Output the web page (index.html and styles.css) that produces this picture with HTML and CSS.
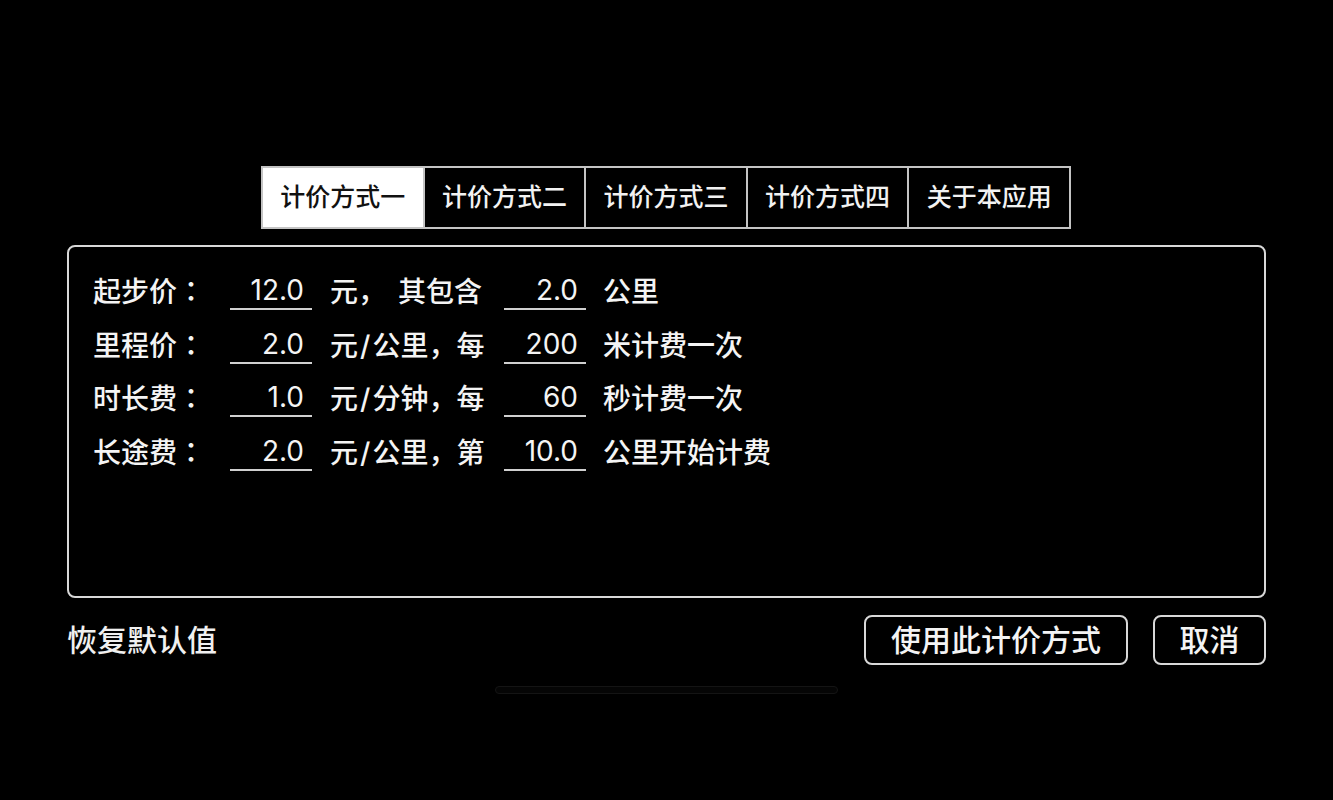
FILE: index.html
```html
<!DOCTYPE html>
<html lang="zh-CN">
<head>
<meta charset="utf-8">
<title>计价方式</title>
<link rel="stylesheet" href="styles.css">
</head>
<body>
<div class="screen">
  <div class="tabs">
    <div class="tab active">计价方式一</div>
    <div class="tab">计价方式二</div>
    <div class="tab">计价方式三</div>
    <div class="tab">计价方式四</div>
    <div class="tab">关于本应用</div>
  </div>

  <div class="panel">
    <div class="row">
      <span class="label">起步价<span class="colon" lang="zh-TW">：</span></span>
      <span class="field">12.0</span>
      <span class="mid"><span>元，</span><span class="gapword">其包含</span></span>
      <span class="field">2.0</span>
      <span class="tail">公里</span>
    </div>
    <div class="row">
      <span class="label">里程价<span class="colon" lang="zh-TW">：</span></span>
      <span class="field">2.0</span>
      <span class="mid">元<span class="slash">/</span>公里，每</span>
      <span class="field">200</span>
      <span class="tail">米计费一次</span>
    </div>
    <div class="row">
      <span class="label">时长费<span class="colon" lang="zh-TW">：</span></span>
      <span class="field">1.0</span>
      <span class="mid">元<span class="slash">/</span>分钟，每</span>
      <span class="field">60</span>
      <span class="tail">秒计费一次</span>
    </div>
    <div class="row">
      <span class="label">长途费<span class="colon" lang="zh-TW">：</span></span>
      <span class="field">2.0</span>
      <span class="mid">元<span class="slash">/</span>公里，第</span>
      <span class="field">10.0</span>
      <span class="tail">公里开始计费</span>
    </div>
  </div>

  <div class="footer">
    <span class="reset">恢复默认值</span>
    <div class="actions">
      <button class="btn btn-use">使用此计价方式</button>
      <button class="btn btn-cancel">取消</button>
    </div>
  </div>

  <div class="home-indicator"></div>
</div>
</body>
</html>
```

FILE: styles.css
```css
html, body {
  margin: 0;
  padding: 0;
  background: #000;
}

body {
  width: 1333px;
  height: 800px;
  overflow: hidden;
  color: #f4f4f4;
  font-family: "Inter", "Noto Sans CJK SC", sans-serif;
  font-weight: 500;
}

.screen {
  width: 1199px;
  margin-left: 67px;
  padding-top: 166px;
}

/* Tabs */
.tabs {
  display: flex;
  width: 810px;
  height: 63px;
  margin-left: 194px;
  box-sizing: border-box;
  border: 2px solid #c4c4c4;
}

.tab {
  flex: 1;
  display: flex;
  align-items: center;
  justify-content: center;
  box-sizing: border-box;
  padding-bottom: 5px;
  font-size: 25px;
  color: #f2f2f2;
  border-left: 2px solid #c4c4c4;
}

.tab:first-child {
  border-left: none;
}

.tab.active {
  background: #fff;
  color: #111;
}

/* Panel */
.panel {
  margin-top: 16px;
  height: 353px;
  box-sizing: border-box;
  border: 2px solid #d8d8d8;
  border-radius: 8px;
  padding: 18px 24px 0 24px;
}

.row {
  display: flex;
  align-items: center;
  height: 53.7px;
  font-size: 28px;
}

.label,
.mid,
.tail {
  padding-bottom: 4px;
}

.label {
  width: 137px;
  flex: none;
  white-space: nowrap;
}

.colon {
  font-family: "Noto Sans CJK TC", "Noto Sans CJK SC", sans-serif;
}

.slash {
  padding: 0 2px;
}

.field {
  flex: none;
  width: 82px;
  height: 36px;
  line-height: 32px;
  box-sizing: border-box;
  border-bottom: 2px solid #d0d0d0;
  text-align: right;
  padding-right: 8px;
  font-weight: 400;
}

.mid {
  flex: none;
  width: 192px;
  box-sizing: border-box;
  padding-left: 18px;
  white-space: nowrap;
}

.gapword {
  margin-left: 12px;
}

.tail {
  padding-left: 17px;
  white-space: nowrap;
}

/* Footer */
.footer {
  display: flex;
  justify-content: space-between;
  align-items: center;
  margin-top: 17px;
  height: 50px;
}

.reset {
  font-size: 30px;
  color: #f0f0f0;
  padding-bottom: 4px;
}

.actions {
  display: flex;
  gap: 25px;
}

.btn {
  height: 50px;
  box-sizing: border-box;
  border: 2px solid #d8d8d8;
  border-radius: 8px;
  background: #000;
  color: #f4f4f4;
  font-family: "Noto Sans CJK SC", sans-serif;
  font-weight: 500;
  font-size: 30px;
  padding: 0 0 4px 0;
  display: flex;
  align-items: center;
  justify-content: center;
}

.btn-use {
  width: 264px;
}

.btn-cancel {
  width: 113px;
}

.home-indicator {
  width: 343px;
  height: 8px;
  margin: 21px auto 0 auto;
  box-sizing: border-box;
  background: #050505;
  border: 1px solid #141414;
  border-radius: 4px;
}
```
